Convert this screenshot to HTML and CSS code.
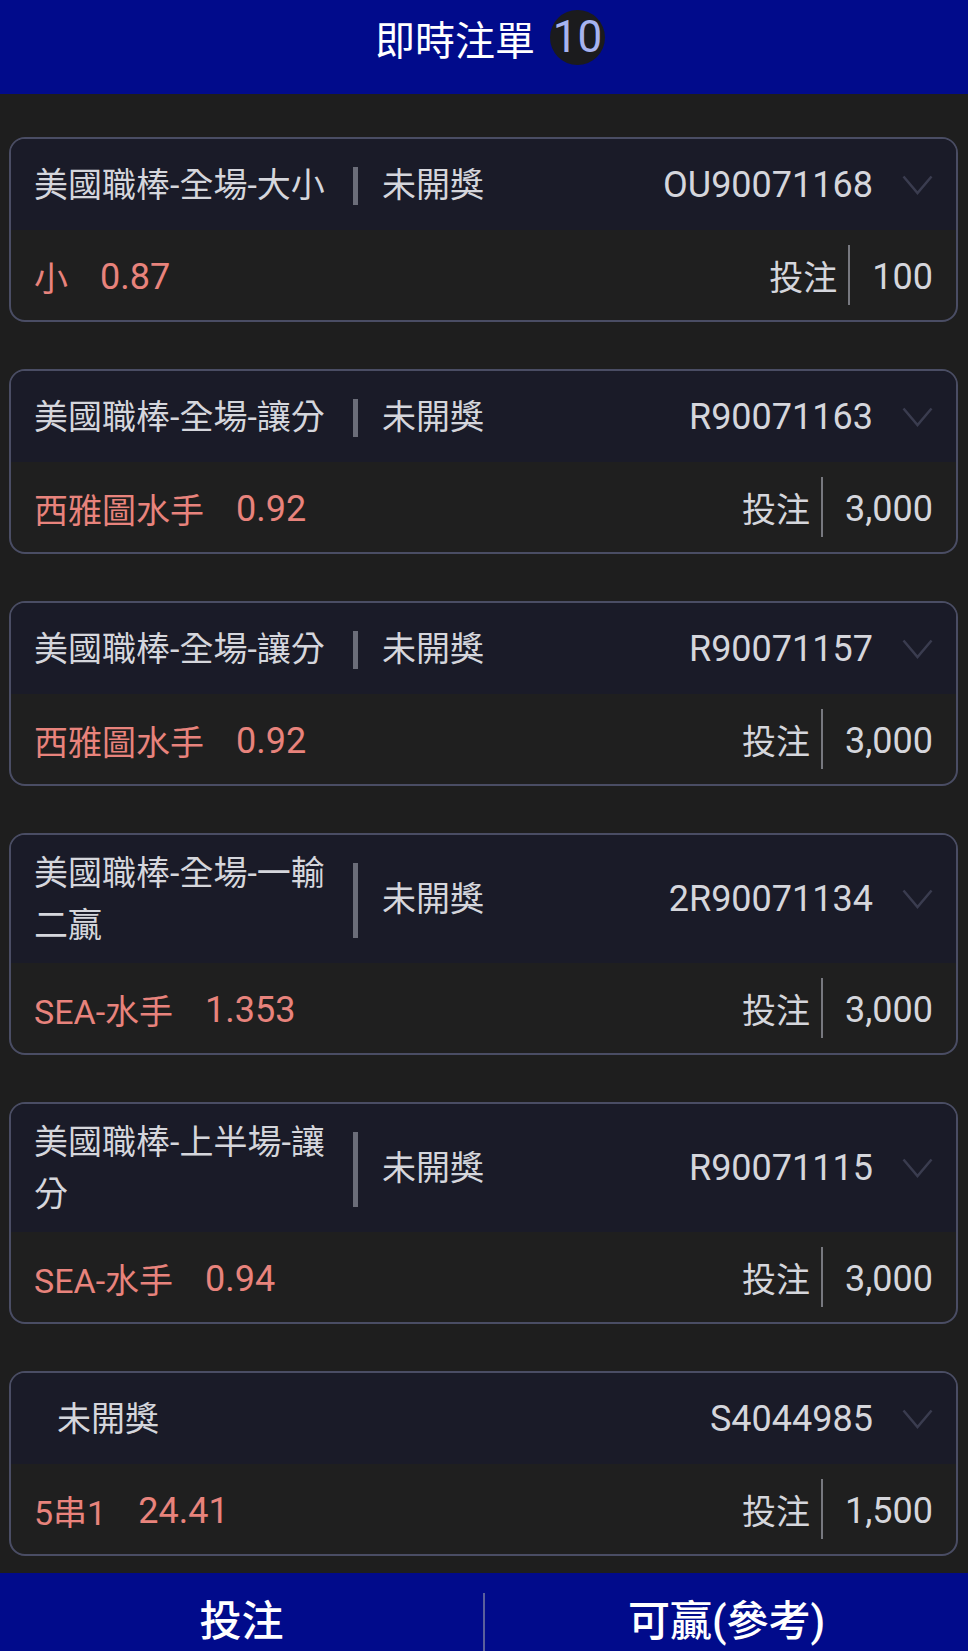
FILE: index.html
```html
<!DOCTYPE html>
<html lang="zh-Hant">
<head>
    <meta charset="UTF-8">
    <meta name="viewport" content="width=device-width, initial-scale=1.0">
    <title>即時注單</title>
    <link rel="stylesheet" href="styles.css">
</head>
<body>
    <header class="topbar">
        <div class="topbar-title">
            <span>即時注單</span>
            <span class="count">10</span>
        </div>
    </header>

    <main class="ticket-list">
        <div class="ticket">
            <div class="ticket-head">
                <div class="ticket-title">美國職棒-全場-大小</div>
                <div class="ticket-bar"></div>
                <div class="ticket-status">未開獎</div>
                <div class="ticket-no">OU90071168</div>
                <svg class="chevron" viewBox="0 0 31 20"><polyline points="1.5,1.5 15.5,18 29.5,1.5"/></svg>
            </div>
            <div class="ticket-body">
                <span class="pick">小</span>
                <span class="odds">0.87</span>
                <span class="stake-label">投注</span>
                <span class="stake">100</span>
            </div>
        </div>

        <div class="ticket">
            <div class="ticket-head">
                <div class="ticket-title">美國職棒-全場-讓分</div>
                <div class="ticket-bar"></div>
                <div class="ticket-status">未開獎</div>
                <div class="ticket-no">R90071163</div>
                <svg class="chevron" viewBox="0 0 31 20"><polyline points="1.5,1.5 15.5,18 29.5,1.5"/></svg>
            </div>
            <div class="ticket-body">
                <span class="pick">西雅圖水手</span>
                <span class="odds">0.92</span>
                <span class="stake-label">投注</span>
                <span class="stake">3,000</span>
            </div>
        </div>

        <div class="ticket">
            <div class="ticket-head">
                <div class="ticket-title">美國職棒-全場-讓分</div>
                <div class="ticket-bar"></div>
                <div class="ticket-status">未開獎</div>
                <div class="ticket-no">R90071157</div>
                <svg class="chevron" viewBox="0 0 31 20"><polyline points="1.5,1.5 15.5,18 29.5,1.5"/></svg>
            </div>
            <div class="ticket-body">
                <span class="pick">西雅圖水手</span>
                <span class="odds">0.92</span>
                <span class="stake-label">投注</span>
                <span class="stake">3,000</span>
            </div>
        </div>

        <div class="ticket">
            <div class="ticket-head">
                <div class="ticket-title">美國職棒-全場-一輸二贏</div>
                <div class="ticket-bar"></div>
                <div class="ticket-status">未開獎</div>
                <div class="ticket-no">2R90071134</div>
                <svg class="chevron" viewBox="0 0 31 20"><polyline points="1.5,1.5 15.5,18 29.5,1.5"/></svg>
            </div>
            <div class="ticket-body">
                <span class="pick">SEA-水手</span>
                <span class="odds">1.353</span>
                <span class="stake-label">投注</span>
                <span class="stake">3,000</span>
            </div>
        </div>

        <div class="ticket">
            <div class="ticket-head">
                <div class="ticket-title">美國職棒-上半場-讓分</div>
                <div class="ticket-bar"></div>
                <div class="ticket-status">未開獎</div>
                <div class="ticket-no">R90071115</div>
                <svg class="chevron" viewBox="0 0 31 20"><polyline points="1.5,1.5 15.5,18 29.5,1.5"/></svg>
            </div>
            <div class="ticket-body">
                <span class="pick">SEA-水手</span>
                <span class="odds">0.94</span>
                <span class="stake-label">投注</span>
                <span class="stake">3,000</span>
            </div>
        </div>

        <!-- parlay: no title column -->
        <div class="ticket">
            <div class="ticket-head">
                <div class="ticket-status ticket-status--solo">未開獎</div>
                <div class="ticket-no">S4044985</div>
                <svg class="chevron" viewBox="0 0 31 20"><polyline points="1.5,1.5 15.5,18 29.5,1.5"/></svg>
            </div>
            <div class="ticket-body">
                <span class="pick">5串1</span>
                <span class="odds">24.41</span>
                <span class="stake-label">投注</span>
                <span class="stake">1,500</span>
            </div>
        </div>
    </main>

    <footer class="actions">
        <div class="action">投注</div>
        <div class="action action-win">可贏(參考)</div>
    </footer>
</body>
</html>
```

FILE: styles.css
```css
html, body {
    height: 1651px;
    overflow: hidden;
}

body {
    margin: 0;
    background: #1e1e1e;
    font-family: Roboto, "Noto Sans CJK TC", sans-serif;
    color: #d5d6dc;
}

.topbar {
    height: 94px;
    box-sizing: border-box;
    padding-top: 10px;
    background: #010b8b;
}

.topbar-title {
    height: 55px;
    display: flex;
    align-items: center;
    justify-content: center;
    gap: 15px;
    padding-left: 12px;
    font-size: 40px;
    color: #fff;
}

.count {
    width: 55px;
    height: 55px;
    border-radius: 50%;
    background: #1b1b1d;
    color: #a7b3f0;
    font-size: 44px;
    line-height: 55px;
    text-align: center;
}

.ticket-list {
    display: flex;
    flex-direction: column;
    gap: 47px;
    padding: 43px 10px 17px 9px;
}

.ticket {
    border: 2px solid #4a4d64;
    border-radius: 16px;
    overflow: hidden;
    background: #1f1f1f;
}

.ticket-head {
    display: flex;
    align-items: center;
    min-height: 91px;
    box-sizing: border-box;
    padding: 12px 23px;
    background: #1a1b28;
    font-size: 34px;
}

.ticket-title {
    flex: 0 0 300px;
    line-height: 52px;
}

.ticket-bar {
    flex: 0 0 5px;
    align-self: stretch;
    margin: 16px 24px 13px 19px;
    background: #6b6d79;
}

.ticket-status {
    line-height: 52px;
}

.ticket-status--solo {
    margin-left: 23px;
}

.ticket-no {
    margin-left: auto;
    font-size: 36px;
}

.chevron {
    width: 31px;
    height: 20px;
    margin-left: 29px;
    fill: none;
    stroke: #3a3c4f;
    stroke-width: 2.5;
}

.ticket-body {
    display: flex;
    align-items: center;
    min-height: 90px;
    box-sizing: border-box;
    padding: 3px 23px 0;
    font-size: 34px;
}

.pick,
.odds {
    color: #e8837c;
}

.odds {
    margin-left: 32px;
    font-size: 36px;
}

.stake-label {
    margin-left: auto;
    align-self: stretch;
    display: flex;
    align-items: center;
    margin-top: 12px;
    margin-bottom: 15px;
    padding-right: 11px;
    border-right: 2px solid #77787f;
}

.stake {
    padding-left: 22px;
    font-size: 36px;
}

.actions {
    display: flex;
    height: 120px;
    background: #010b8b;
}

.action {
    flex: 1;
    margin-top: 20px;
    padding-top: 4px;
    text-align: center;
    font-size: 42px;
    font-weight: 500;
    line-height: 50px;
    color: #fff;
}

.action-win {
    border-left: 2px solid #5a5f9c;
}
```
